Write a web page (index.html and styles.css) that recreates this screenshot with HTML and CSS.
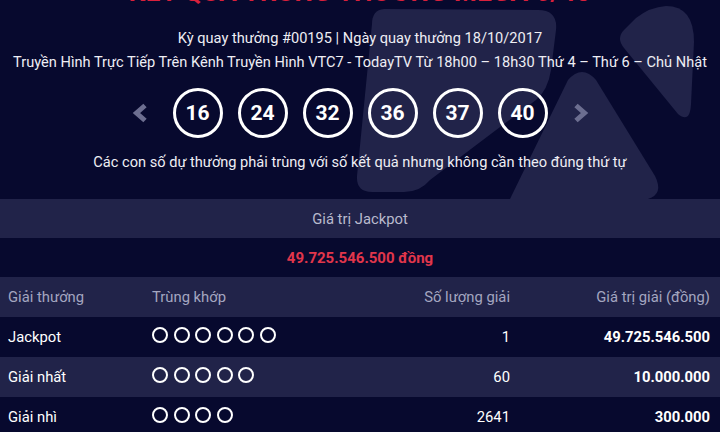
FILE: index.html
```html
<!DOCTYPE html>
<html lang="vi">
<head>
<meta charset="utf-8">
<title>Kết quả Mega 6/45</title>
<link rel="stylesheet" href="styles.css">
</head>
<body>
<div class="page">
  <header class="hero">
    <svg class="hero-bg" width="720" height="199" viewBox="0 0 720 199" aria-hidden="true">
      <path class="blob" d="M384 9 Q372 10 372 24 L357 176 Q356 192 372 192 L404 192 Q420 192 430 180 L536 100 Q548 90 551 70 L556 30 Q558 10 538 10 Z"/>
      <path class="blob" d="M568 80 Q582 64 596 80 L655 176 Q664 194 648 199 L510 199 Z"/>
      <path class="blob" d="M624 30 Q616 38 624 48 L678 114 Q690 124 691 104 L694 42 Q694 6 666 6 Q650 7 636 18 Z"/>
    </svg>
    <h1 class="title">KẾT QUẢ TRÚNG THƯỞNG MEGA 6/45</h1>
    <p class="meta">Kỳ quay thưởng #00195 | Ngày quay thưởng 18/10/2017</p>
    <p class="meta">Truyền Hình Trực Tiếp Trên Kênh Truyền Hình VTC7 - TodayTV Từ 18h00 – 18h30 Thứ 4 – Thứ 6 – Chủ Nhật</p>
    <div class="draw">
      <svg class="arrow" width="16" height="20" viewBox="0 0 16 20"><polyline points="13,2.5 4.5,10 13,17.5"/></svg>
      <div class="balls">
        <span class="ball">16</span>
        <span class="ball">24</span>
        <span class="ball">32</span>
        <span class="ball">36</span>
        <span class="ball">37</span>
        <span class="ball">40</span>
      </div>
      <svg class="arrow" width="16" height="20" viewBox="0 0 16 20"><polyline points="3,2.5 11.5,10 3,17.5"/></svg>
    </div>
    <p class="note">Các con số dự thưởng phải trùng với số kết quả nhưng không cần theo đúng thứ tự</p>
  </header>

  <div class="jackpot-label">Giá trị Jackpot</div>
  <div class="jackpot-value">49.725.546.500 đồng</div>

  <div class="prizes">
    <div class="row head">
      <span>Giải thưởng</span>
      <span>Trùng khớp</span>
      <span class="num">Số lượng giải</span>
      <span class="num">Giá trị giải (đồng)</span>
    </div>
    <div class="row">
      <span class="name">Jackpot</span>
      <span class="dots"><i></i><i></i><i></i><i></i><i></i><i></i></span>
      <span class="num">1</span>
      <span class="num val">49.725.546.500</span>
    </div>
    <div class="row alt">
      <span class="name">Giải nhất</span>
      <span class="dots"><i></i><i></i><i></i><i></i><i></i></span>
      <span class="num">60</span>
      <span class="num val">10.000.000</span>
    </div>
    <div class="row">
      <span class="name">Giải nhì</span>
      <span class="dots"><i></i><i></i><i></i><i></i></span>
      <span class="num">2641</span>
      <span class="num val">300.000</span>
    </div>
  </div>
</div>
</body>
</html>
```

FILE: styles.css
```css
* { box-sizing: border-box; }

html, body {
  margin: 0;
  padding: 0;
  background: #07092e;
  overflow: hidden;
}

body {
  font-family: Roboto, "Liberation Sans", sans-serif;
  color: #ffffff;
  width: 720px;
  height: 432px;
}

.page {
  width: 720px;
}

.hero {
  position: relative;
  height: 199px;
  display: flex;
  flex-direction: column;
  align-items: center;
  overflow: hidden;
}

.hero-bg {
  position: absolute;
  left: 0;
  top: 0;
  z-index: 0;
}

.blob { fill: #212349; }

.hero > *:not(.hero-bg) {
  position: relative;
  z-index: 1;
}

.title {
  margin: -23px 0 0;
  font-size: 26px;
  line-height: 30px;
  font-weight: 700;
  color: #d9203c;
  letter-spacing: 0.4px;
  white-space: nowrap;
}

.meta {
  margin: 0;
  font-size: 14.6px;
  line-height: 20px;
  color: #eeeef4;
  white-space: nowrap;
}

.title + .meta { margin-top: 21px; }
.meta + .meta { margin-top: 4px; }

.draw {
  margin-top: 16px;
  display: flex;
  align-items: center;
  gap: 25px;
}

.arrow polyline {
  fill: none;
  stroke: #6c6e90;
  stroke-width: 5;
  stroke-linecap: butt;
  stroke-linejoin: miter;
}

.balls {
  display: flex;
  gap: 15px;
}

.ball {
  width: 50px;
  height: 50px;
  border: 3px solid #ffffff;
  border-radius: 50%;
  display: flex;
  align-items: center;
  justify-content: center;
  font-size: 21px;
  font-weight: 700;
  color: #ffffff;
}

.note {
  margin: 14px 0 0;
  font-size: 14.6px;
  line-height: 20px;
  color: #eeeef4;
  white-space: nowrap;
}

.jackpot-label {
  height: 39px;
  background: #212349;
  display: flex;
  align-items: center;
  justify-content: center;
  font-size: 14.8px;
  color: #b9bacd;
}

.jackpot-value {
  height: 39px;
  display: flex;
  align-items: center;
  justify-content: center;
  font-size: 15px;
  font-weight: 700;
  color: #e1364b;
}

.row {
  height: 40px;
  display: grid;
  grid-template-columns: 144px 1fr 130px 200px;
  align-items: center;
  padding: 0 10px 0 8px;
  font-size: 14.8px;
}

.row.head {
  background: #212349;
  color: #a4a6c0;
}

.row.alt { background: #212349; }

.name { color: #ffffff; }

.num { text-align: right; }

.val { font-weight: 700; }

.dots {
  display: flex;
  gap: 5.5px;
  margin-top: -4px;
}

.dots i {
  width: 16px;
  height: 16px;
  border: 2.5px solid #ffffff;
  border-radius: 50%;
}
```
